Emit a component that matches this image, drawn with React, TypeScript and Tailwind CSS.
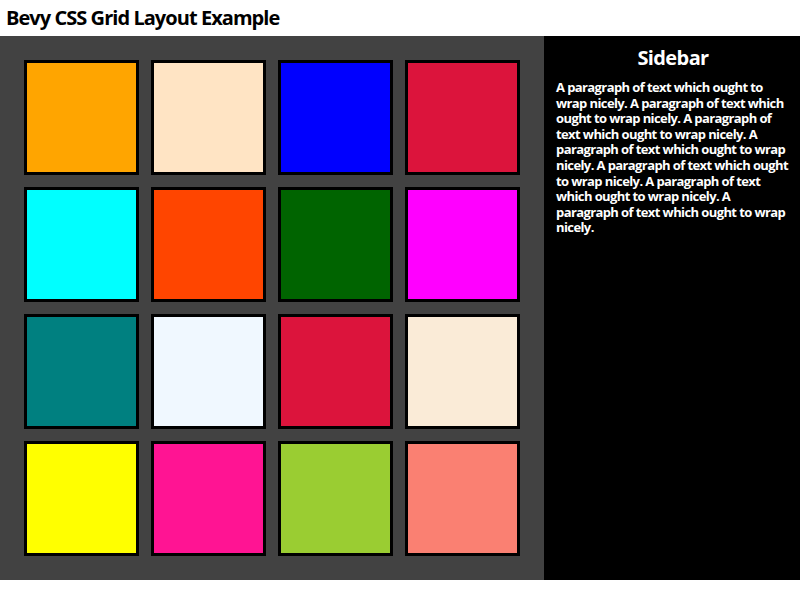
import React from "react";

const colors: string[] = [
  "bg-[#ffa500]",
  "bg-[#ffe4c4]",
  "bg-[#0000ff]",
  "bg-[#dc143c]",
  "bg-[#00ffff]",
  "bg-[#ff4500]",
  "bg-[#006400]",
  "bg-[#ff00ff]",
  "bg-[#008080]",
  "bg-[#f0f8ff]",
  "bg-[#dc143c]",
  "bg-[#faebd7]",
  "bg-[#ffff00]",
  "bg-[#ff1493]",
  "bg-[#9acd32]",
  "bg-[#fa8072]",
];

const para =
  "A paragraph of text which ought to wrap nicely. A paragraph of text which ought to wrap nicely. A paragraph of text which ought to wrap nicely. A paragraph of text which ought to wrap nicely. A paragraph of text which ought to wrap nicely. A paragraph of text which ought to wrap nicely. A paragraph of text which ought to wrap nicely.";

const App: React.FC = () => {
  return (
    <div className="w-[800px] h-[600px] bg-white grid grid-cols-[544px_1fr] grid-rows-[36px_544px_20px] font-['Open_Sans',sans-serif] font-bold">
      {/* Header */}
      <div className="col-span-2 px-[6px] py-[6px] text-[20px] leading-[24px] text-black tracking-[-0.95px]">
        Bevy CSS Grid Layout Example
      </div>

      {/* Main grid */}
      <div className="bg-[#424242] p-6 grid grid-cols-4 grid-rows-4 gap-3">
        {colors.map((c, i) => (
          <div key={i} className={`border-[3px] border-black ${c}`} />
        ))}
      </div>

      {/* Sidebar */}
      <div className="bg-black py-[10px] pl-[12px] pr-[10px] flex flex-col gap-[10px] text-white">
        <div className="text-center text-[20px] leading-[24px] tracking-[-0.6px]">Sidebar</div>
        <p className="text-[13px] leading-[15.6px] tracking-[-0.6px]">{para}</p>
      </div>

      {/* Footer */}
      <div className="col-span-2 bg-white" />
    </div>
  );
};

export default App;
